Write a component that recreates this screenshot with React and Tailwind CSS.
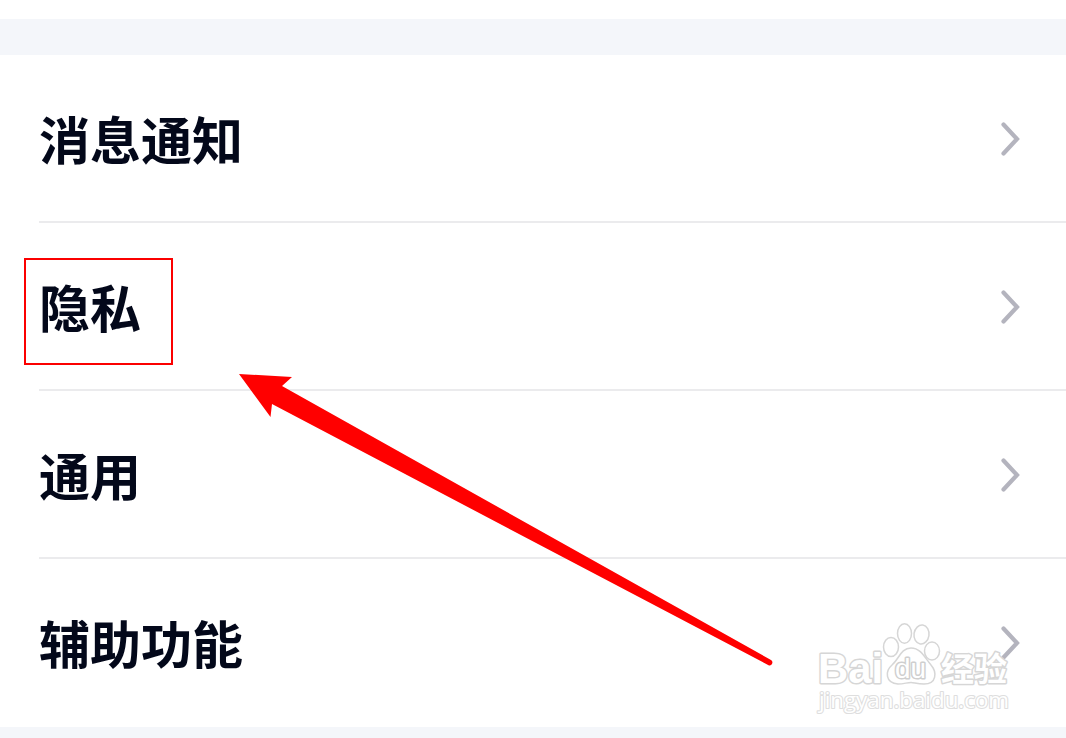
const items = ['消息通知', '隐私', '通用', '辅助功能'];

function Chevron() {
  return (
    <svg className="mt-0.5 mr-[43px] h-10 w-6" viewBox="0 0 24 40" fill="none" stroke="#b4b4be" strokeWidth={4.2} strokeLinecap="round" strokeLinejoin="miter">
      <path d="M4.500 5.500L18 20L4.500 34.500" />
    </svg>
  );
}

function SettingRow({ label, highlighted, last }) {
  return (
    <div className="pl-[39px]">
      <div className={`flex h-[168px] items-center justify-between border-b-2 ${last ? 'border-transparent' : 'border-[#ebebed]'}`}>
        <span className="relative text-[51px] leading-none font-bold text-[#03081a]">
          {label}
          {highlighted && (
            <span className="absolute -left-[15px] -top-[23px] h-[107px] w-[149px] border-2 border-[#fb0000]" />
          )}
        </span>
        <Chevron />
      </div>
    </div>
  );
}

function Arrow() {
  return (
    <svg className="absolute left-0 top-0 pointer-events-none" width="1066" height="738" viewBox="0 0 1066 738">
      <path d="M239 374L292 377L282 386L771 660A3 3 0 0 1 769 665.500L272 404L270.500 417Z" fill="#ff0000" />
    </svg>
  );
}

function Watermark() {
  return (
    <svg
      className="absolute left-[810px] top-[615px] pointer-events-none"
      width="210"
      height="105"
      viewBox="0 0 210 105"
      fill="#ffffff"
      stroke="#d6d6d6"
      strokeWidth={1.5}
      strokeLinejoin="round"
      fontFamily="'Liberation Sans', sans-serif"
    >
      {/* Paw */}
      <ellipse cx="81" cy="32" rx="7.500" ry="9.500" />
      <ellipse cx="94.500" cy="18.500" rx="7" ry="9.800" />
      <ellipse cx="111.500" cy="19.500" rx="7.500" ry="9.500" transform="rotate(8 111.500 19.500)" />
      <ellipse cx="122" cy="36" rx="7.500" ry="9" />
      <path d="M101 33C111 33 115 43 121 50C127 57 127 69 114 69C107 69 104 67.500 101 67.500C97 67.500 94 69 88 69C75 68 75 56 82 50C89 44 91 33 101 33Z" />
      {/* Brand */}
      <text x="8" y="67.500" fontSize="43" fontWeight="bold" textLength="65" lengthAdjust="spacingAndGlyphs" strokeWidth={3} paintOrder="stroke">Bai</text>
      <text x="85" y="63" fontSize="27" textLength="31" lengthAdjust="spacingAndGlyphs" strokeWidth={3} stroke="#cfcfcf" paintOrder="stroke">du</text>
      <text x="131" y="66" fontSize="33" fontWeight="bold" textLength="66" fontFamily="'Noto Sans CJK SC', sans-serif" strokeWidth={3} paintOrder="stroke">经验</text>
      <text x="9" y="93" fontSize="22" textLength="190" lengthAdjust="spacingAndGlyphs" fontFamily="'Open Sans', sans-serif" stroke="#dedede" strokeWidth={2.200} paintOrder="stroke">jingyan.baidu.com</text>
    </svg>
  );
}

export default function App() {
  return (
    <div className="relative h-[738px] w-[1066px] overflow-hidden bg-[#f4f6fa] font-['Noto_Sans_CJK_SC',sans-serif]">
      <div className="h-[19px] bg-white" />
      <div className="mt-9 bg-white">
        {items.map((label, i) => (
          <SettingRow key={label} label={label} highlighted={label === '隐私'} last={i === items.length - 1} />
        ))}
      </div>
      <Arrow />
      <Watermark />
    </div>
  );
}
